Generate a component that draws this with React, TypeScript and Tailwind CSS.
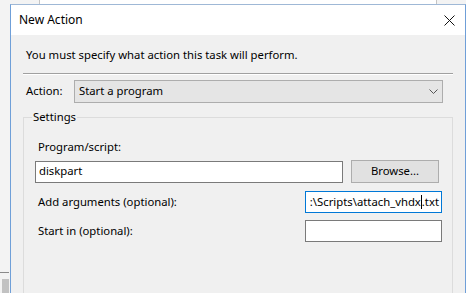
import React from "react";

function TextBox({ className, children }: { className: string; children?: React.ReactNode }) {
  return (
    <div className={`h-[22px] bg-white flex items-center overflow-hidden whitespace-nowrap ${className}`}>
      {children}
    </div>
  );
}

export default function App() {
  return (
    <div
      className="relative w-[466px] h-[293px] overflow-hidden bg-[#f3f3f3] text-[11.3px] text-black"
      style={{ fontFamily: '"Noto Sans", "Open Sans", sans-serif' }}
    >
      {/* window behind the dialog */}
      <div className="absolute left-[39px] top-0 w-[398px] h-[4px] bg-white border-x border-[#c4c4c4]" />
      <div className="absolute left-0 top-[272px] w-[9px] h-px bg-[#8a8a8a]" />
      <div className="absolute left-[2px] top-[279px] w-[7px] h-[14px] bg-[#c2c2c2]" />

      {/* New Action dialog */}
      <div className="absolute left-[10px] top-[4px] w-[456px] h-[320px] border border-[#6f9fd8] border-t-[#9fb8d6] bg-[#f0f0f0]">
        <div className="h-[30px] bg-white flex items-center justify-between pl-[8px] pr-[10px]">
          <span className="text-[12px]">New Action</span>
          <svg width="11" height="11" viewBox="0 0 11 11">
            <path d="M0.5 0.5 L10.5 10.5 M10.5 0.5 L0.5 10.5" stroke="#111" strokeWidth="1" />
          </svg>
        </div>

        <div className="px-[12px]">
          <div className="mt-[12px] h-[16px] leading-[16px] pl-[3px]">
            You must specify what action this task will perform.
          </div>
          <div className="mt-[10px] border-t border-[#a0a0a0] border-b border-b-white" />

          <div className="mt-[5px] flex items-center h-[23px]">
            <span className="w-[51px] pl-[3px]">Action:</span>
            <div className="w-[369px] h-[23px] bg-[#e5e5e5] border border-[#adadad] flex items-center justify-between pl-[4px] pr-[4px]">
              <span>Start a program</span>
              <svg width="9" height="5" viewBox="0 0 9 5">
                <path d="M0.5 0.5 L4.5 4.5 L8.5 0.5" fill="none" stroke="#555" strokeWidth="1" />
              </svg>
            </div>
          </div>

          <div className="relative mt-[14px] w-[430px] h-[200px] border border-[#dcdcdc] pt-[21px] pl-[11px] pr-[10px]">
            <span className="absolute left-[8px] -top-[9px] px-[1px] bg-[#f0f0f0] leading-[16px]">Settings</span>

            <div className="pl-[3px] h-[16px] leading-[16px]">Program/script:</div>
            <div className="mt-[5px] flex items-center">
              <TextBox className="w-[308px] border border-[#7a7a7a] pl-[3px]">diskpart</TextBox>
              <div className="ml-[8px] w-[88px] h-[23px] bg-[#e1e1e1] border border-[#adadad] flex items-center justify-center">
                Browse...
              </div>
            </div>

            <div className="mt-[8px] flex items-center justify-between">
              <span className="pl-[3px]">Add arguments (optional):</span>
              <TextBox className="w-[137px] border border-[#0078d7] justify-end pr-[2px]">
                <span>:\Scripts\attach_vhdx</span>
                <span className="inline-block w-px h-[14px] bg-black" />
                <span>.txt</span>
              </TextBox>
            </div>

            <div className="mt-[7px] flex items-center justify-between">
              <span className="pl-[3px]">Start in (optional):</span>
              <TextBox className="w-[137px] border border-[#7a7a7a]" />
            </div>
          </div>
        </div>
      </div>
    </div>
  );
}
